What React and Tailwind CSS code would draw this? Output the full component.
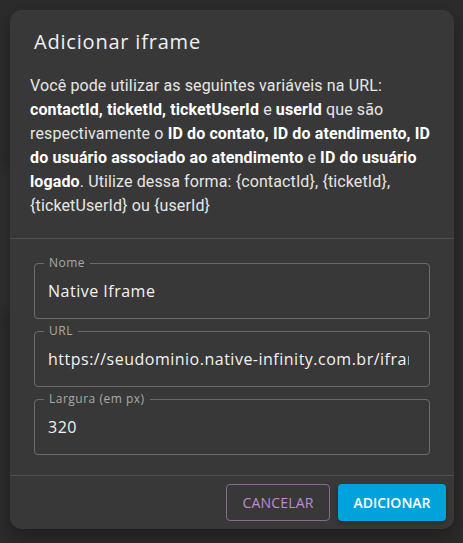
import React from "react";

const poppins = { fontFamily: '"Open Sans", "Noto Sans", sans-serif' };

function Field({ label, value }) {
  return (
    <div className="relative h-[56px] rounded-[4px] border border-[#6b6b6b]">
      <div
        className="absolute left-[9px] top-[-9px] bg-[#383838] px-[5px] text-[12px] leading-[16px] tracking-[0.5px] text-[#a9a9a9]"
        style={poppins}
      >
        {label}
      </div>
      <div className="flex h-full items-center pl-[13px]">
        <div
          className="w-[361px] overflow-hidden whitespace-nowrap text-[16px] leading-[24px] tracking-[0.5px] text-[#f2f2f2]"
          style={poppins}
        >
          {value}
        </div>
      </div>
    </div>
  );
}

export default function App() {
  return (
    <div
      className="relative h-[543px] w-[463px] overflow-hidden bg-[#2c2c2c]"
      style={{ fontFamily: 'Roboto, "Liberation Sans", sans-serif' }}
    >
      <div className="absolute left-0 top-[170px] h-[140px] w-[14px] bg-[#333333] blur-[6px]" />
      <div className="absolute left-[10px] top-[10px] flex w-[444px] flex-col rounded-[12px] bg-[#383838] shadow-[0_8px_20px_rgba(0,0,0,0.35)]">
        <div
          className="px-[24px] pb-[16px] pt-[16px] text-[20px] leading-[32px] tracking-[0.8px] text-[#f0f0f0]"
          style={poppins}
        >
          Adicionar iframe
        </div>
        <p className="px-[20px] pb-[20px] text-[16px] leading-[24px] tracking-[0.12px] text-[#e6e6e6]">
          Você pode utilizar as seguintes variáveis na URL:{" "}
          <b className="text-white">contactId, ticketId, ticketUserId</b> e{" "}
          <b className="text-white">userId</b> que são respectivamente o{" "}
          <b className="text-white">ID do contato, ID do atendimento, ID do usuário associado ao atendimento</b>{" "}
          e <b className="text-white">ID do usuário logado</b>. Utilize dessa forma: {"{contactId}"},{" "}
          {"{ticketId}"}, {"{ticketUserId}"} ou {"{userId}"}
        </p>
        <div className="flex flex-col gap-[12px] border-t border-[#4f4f4f] px-[24px] pb-[20px] pt-[24px]">
          <Field label="Nome" value="Native Iframe" />
          <Field label="URL" value="https://seudominio.native-infinity.com.br/iframe" />
          <Field label="Largura (em px)" value="320" />
        </div>
        <div className="flex justify-end gap-[8px] border-t border-[#4f4f4f] p-[8px]">
          <button
            className="h-[37px] w-[104px] rounded-[4px] border border-[#8a6a92] text-[14px] font-medium uppercase tracking-[0.2px] text-[#c08ccc]"
            style={poppins}
          >
            Cancelar
          </button>
          <button
            className="h-[37px] w-[108px] rounded-[4px] bg-[#00a2dc] text-[14px] font-semibold uppercase text-white shadow-[0_2px_4px_rgba(0,0,0,0.3)]"
            style={poppins}
          >
            Adicionar
          </button>
        </div>
      </div>
    </div>
  );
}
